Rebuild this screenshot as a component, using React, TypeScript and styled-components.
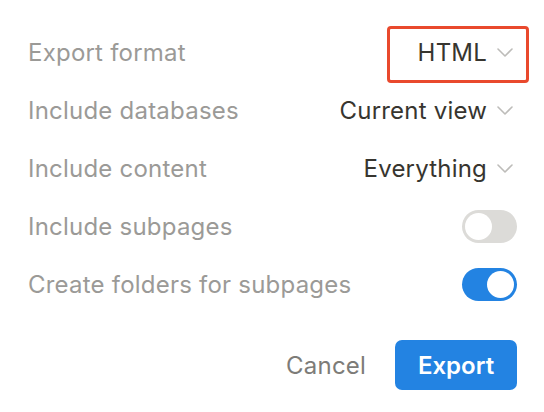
import React, { useState } from "react";
import styled, { createGlobalStyle } from "styled-components";

const GlobalStyle = createGlobalStyle`
  html, body {
    margin: 0;
    padding: 0;
    background: #ffffff;
  }
  body {
    font-family: Inter, "Noto Sans", "Liberation Sans", sans-serif;
    -webkit-font-smoothing: antialiased;
  }
`;

const Panel = styled.div`
  width: 544px;
  height: 412px;
  box-sizing: border-box;
  padding: 23px 27px 0 28px;
  display: flex;
  flex-direction: column;
`;

const Row = styled.div`
  height: 58px;
  display: flex;
  align-items: center;
  justify-content: space-between;
`;

const Label = styled.span`
  font-size: 24px;
  color: #9b9a97;
  letter-spacing: 0.22px;
`;

const Select = styled.div<{ $highlight?: boolean }>`
  position: relative;
  display: flex;
  align-items: center;
  gap: 10px;
  padding-right: 4px;
  font-size: 24px;
  letter-spacing: 0.2px;
  color: #37352f;
  cursor: pointer;

  ${(p) =>
    p.$highlight &&
    `
    &::after {
      content: "";
      position: absolute;
      left: -31px;
      right: -12px;
      top: -12px;
      bottom: -16px;
      border: 3px solid #e9492d;
      border-radius: 4px;
    }
  `}
`;

const Chevron = () => (
  <svg width="16" height="9" viewBox="0 0 16 9" fill="none">
    <path d="M1 1l7 7 7-7" stroke="#bdbcb9" strokeWidth="1.6" strokeLinecap="round" strokeLinejoin="round" />
  </svg>
);

const Track = styled.button<{ $on: boolean }>`
  width: 55px;
  height: 33px;
  border: none;
  padding: 3px;
  border-radius: 17px;
  background: ${(p) => (p.$on ? "#2383e2" : "#dcdbd8")};
  display: flex;
  justify-content: ${(p) => (p.$on ? "flex-end" : "flex-start")};
  align-items: center;
  cursor: pointer;
  box-sizing: border-box;
`;

const Thumb = styled.span`
  width: 27px;
  height: 27px;
  border-radius: 50%;
  background: #ffffff;
`;

const Footer = styled.div`
  margin-top: 27px;
  display: flex;
  justify-content: flex-end;
  align-items: center;
  gap: 29px;
`;

const CancelButton = styled.button`
  border: none;
  background: none;
  padding: 0;
  font-family: inherit;
  font-size: 24px;
  letter-spacing: 0.2px;
  color: #7d7c78;
  cursor: pointer;
`;

const ExportButton = styled.button`
  width: 122px;
  height: 50px;
  border: none;
  border-radius: 7px;
  background: #2383e2;
  color: #ffffff;
  font-family: inherit;
  font-size: 24px;
  font-weight: 600;
  cursor: pointer;
`;

const Toggle = ({ initial }: { initial: boolean }) => {
  const [on, setOn] = useState(initial);
  return (
    <Track $on={on} onClick={() => setOn(!on)}>
      <Thumb />
    </Track>
  );
};

const selects = [
  { label: "Export format", value: "HTML", highlight: true },
  { label: "Include databases", value: "Current view" },
  { label: "Include content", value: "Everything" },
];

export default function App() {
  return (
    <>
      <GlobalStyle />
      <Panel>
        {selects.map((s) => (
          <Row key={s.label}>
            <Label>{s.label}</Label>
            <Select $highlight={s.highlight}>
              {s.value}
              <Chevron />
            </Select>
          </Row>
        ))}
        <Row>
          <Label>Include subpages</Label>
          <Toggle initial={false} />
        </Row>
        <Row>
          <Label>Create folders for subpages</Label>
          <Toggle initial={true} />
        </Row>
        <Footer>
          <CancelButton>Cancel</CancelButton>
          <ExportButton>Export</ExportButton>
        </Footer>
      </Panel>
    </>
  );
}
